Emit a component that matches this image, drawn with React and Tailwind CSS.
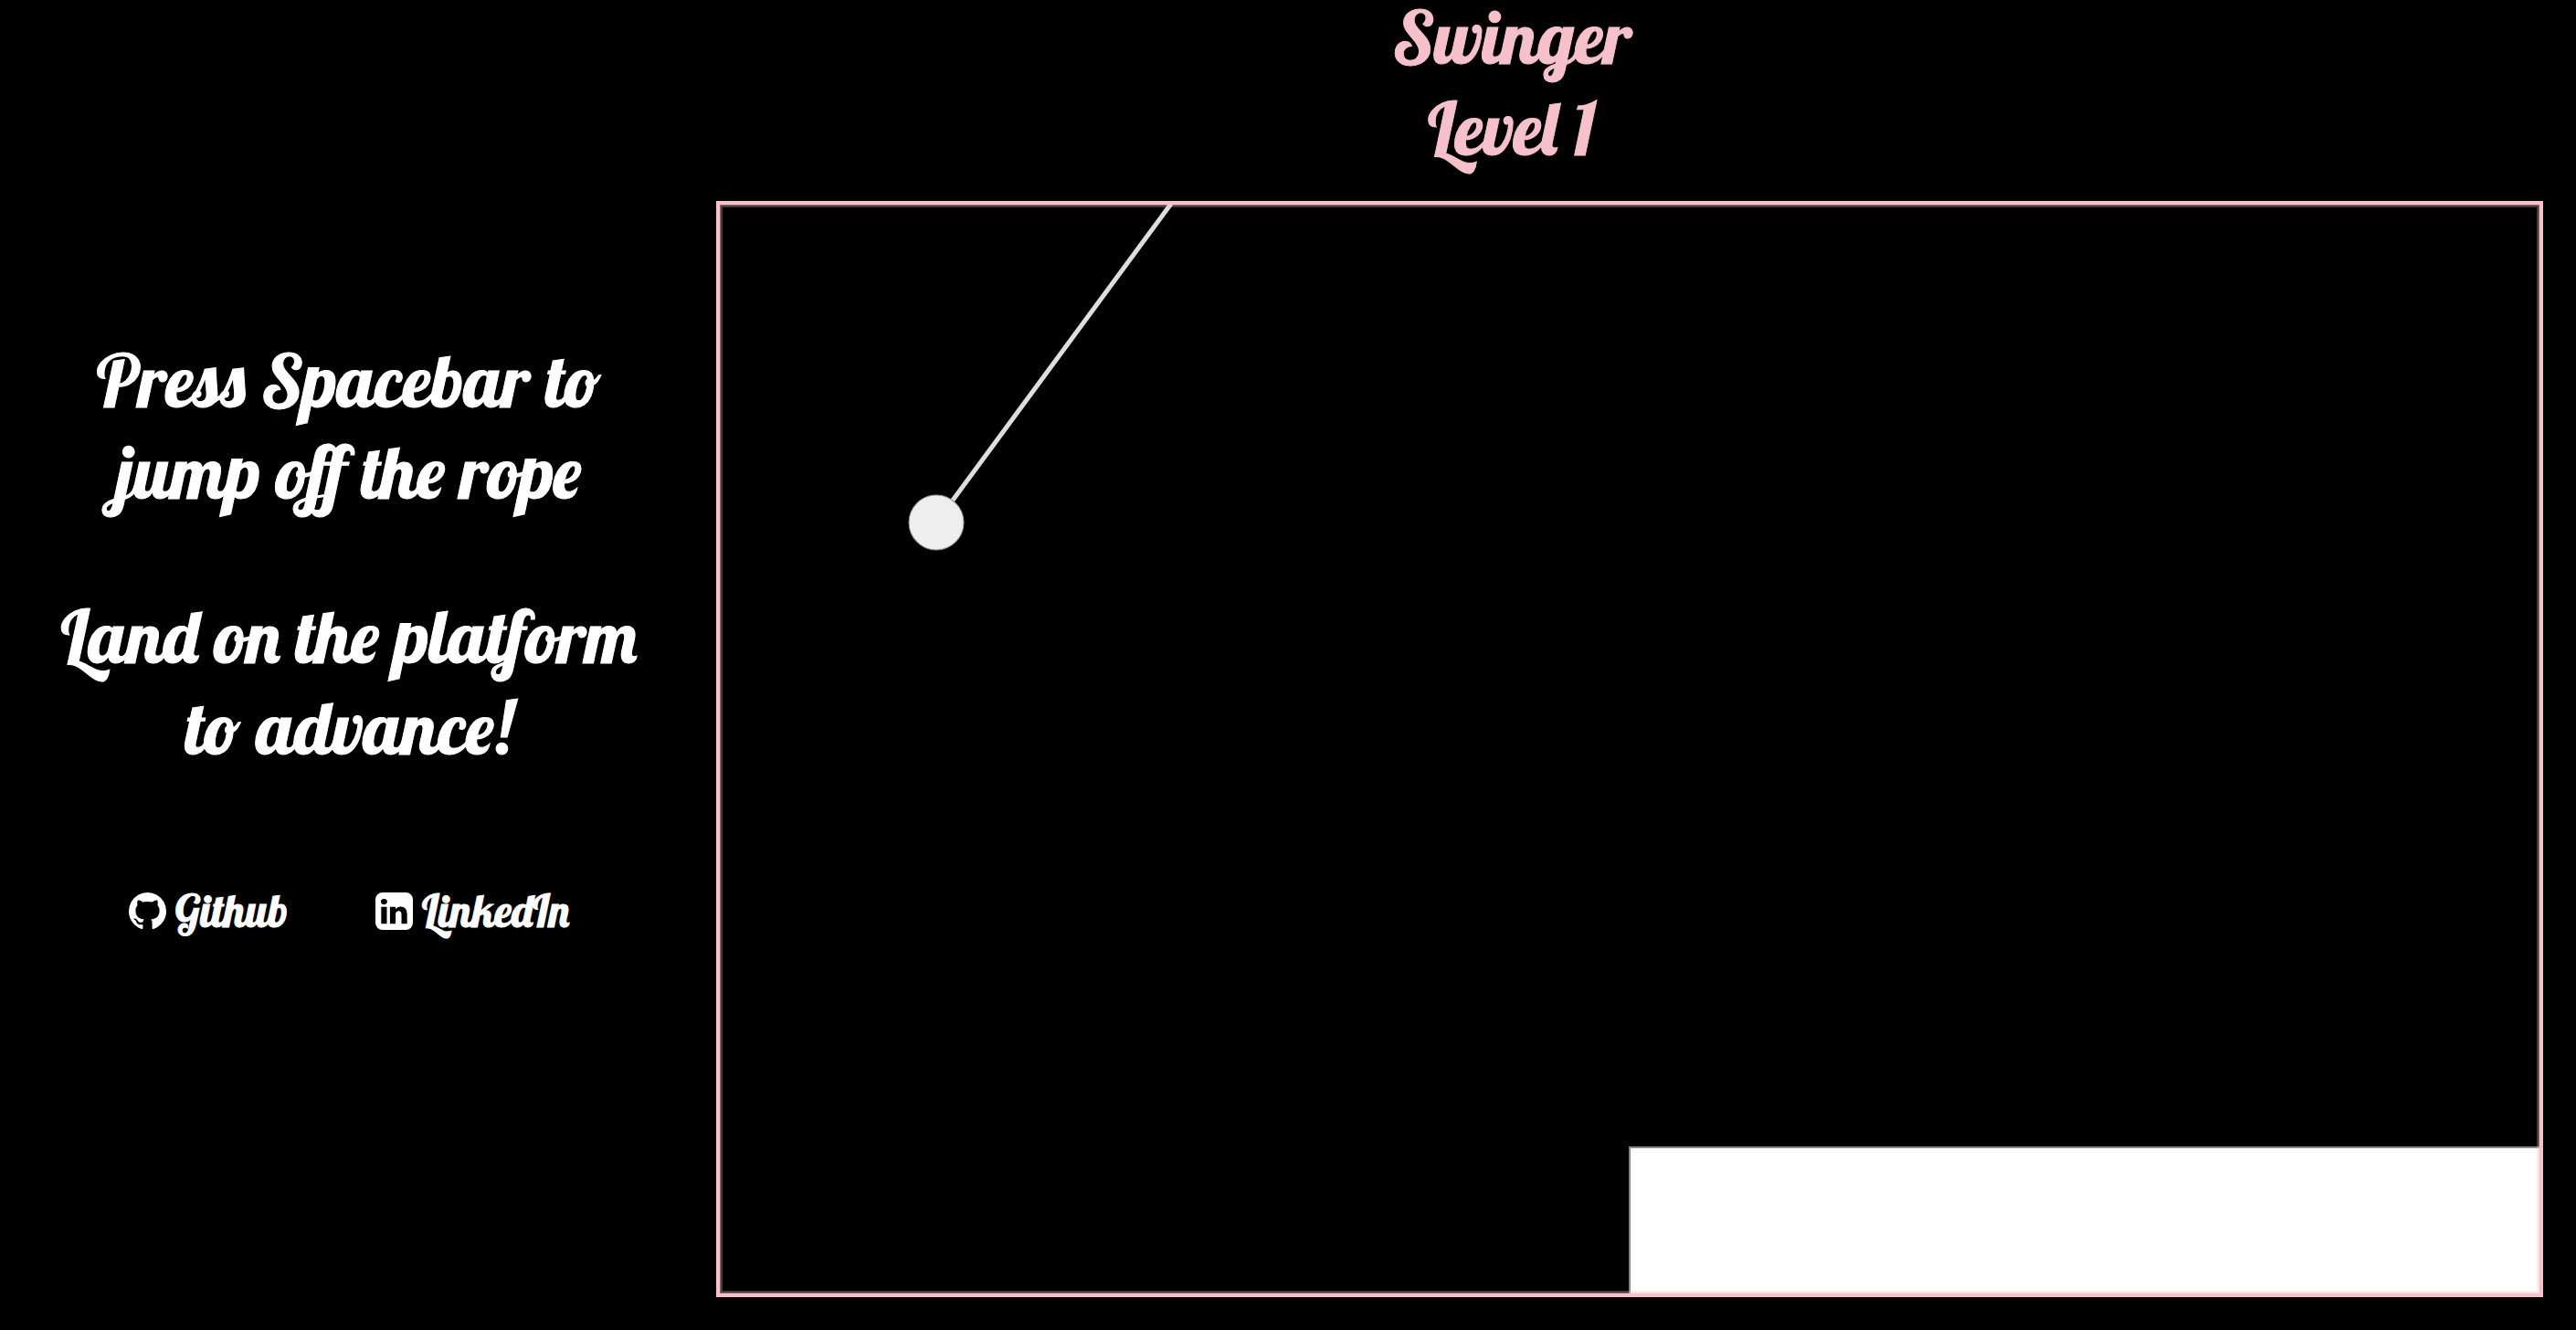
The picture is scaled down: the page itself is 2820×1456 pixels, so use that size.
const githubPath =
  "M768 0q209 0 385.5 103t279.5 279.5 103 385.5q0 251-146.5 451.5t-378.5 277.5q-27 5-40-7t-13-30q0-3 .5-76.5t.5-134.5q0-97-52-142 57-6 102.5-18t94-39 81-66.5 53-105 20.5-150.5q0-119-79-206 37-91-8-204-28-9-81 11t-92 44l-38 24q-93-26-192-26t-192 26q-16-11-42.5-27t-83.5-38.5-85-13.5q-45 113-8 204-79 87-79 206 0 85 20.5 150t52.5 105 80.5 67 94 39 102.5 18q-39 36-49 103-21 10-45 15t-57 5-65.5-21.5-55.5-62.5q-19-32-48.5-52t-49.5-24l-20-3q-21 0-29 4.5t-5 11.5 9 14 13 12l7 5q22 10 43.5 38t31.5 51l10 23q13 38 44 61.5t67 30 69.5 7 55.5-3.5l23-4q0 38 .5 88.5t.5 54.5q0 18-13 30t-40 7q-232-77-378.5-277.5t-146.5-451.5q0-209 103-385.5t279.5-279.5 385.5-103z";

const linkedInPath =
  "M237 1286h231v-694h-231v694zM483 378q-1-52-36-86t-93-34-94.5 34-36.5 86q0 51 35.5 85.5t92.5 34.5h1q59 0 95-34.5t36-85.5zM1068 1286h231v-398q0-154-73-233t-193-79q-136 0-209 117h2v-101h-231q3 66 0 694h231v-388q0-38 7-56 15-35 45-59.5t74-24.5q116 0 116 157v371zM1536 288v960q0 119-84.5 203.5t-203.5 84.5h-960q-119 0-203.5-84.5t-84.5-203.5v-960q0-119 84.5-203.5t203.5-84.5h960q119 0 203.5 84.5t84.5 203.5z";

const links = [
  { label: "Github", href: "https://github.com", path: githubPath },
  { label: "LinkedIn", href: "https://www.linkedin.com", path: linkedInPath },
];

function GameCanvas() {
  return (
    <div className="aspect-5/3 border-4 border-[#f6c1cb]">
      <svg
        viewBox="0 0 1992 1192"
        className="block h-full w-full"
        role="img"
        aria-label="Ball swinging on a rope above a platform"
      >
        <line x1="494" y1="-1" x2="237" y2="348" stroke="#dedede" strokeWidth="5" />
        <circle cx="237" cy="348" r="30" fill="#eeeeee" stroke="#999999" strokeWidth="1" />
        <rect x="996" y="1032" width="996" height="160" fill="#ffffff" />
        <path d="M996 1192V1032H1992" fill="none" stroke="#858585" strokeWidth="2" />
        {/* soft inner edge of the frame */}
        <rect x="1.5" y="1.5" width="1989" height="1189" fill="none" stroke="#f6c1cb" strokeOpacity="0.3" strokeWidth="3" />
        <rect x="0.5" y="0.5" width="1991" height="1191" fill="none" stroke="#f6c1cb" strokeOpacity="0.4" strokeWidth="1" />
      </svg>
    </div>
  );
}

export default function App() {
  return (
    <div className="min-h-screen bg-black font-['Lobster','Liberation_Serif',serif] text-[80px] leading-[100px] text-white [-webkit-text-stroke:1px]">
      <header className="mb-[30px] pl-[17.4%] text-center text-[#f6c1cb]">
        <h1 className="leading-[80px]">Swinger</h1>
        <h2 className="mt-[10px]">Level 1</h2>
      </header>
      <main className="flex items-start">
        <aside className="w-[27.8%] pt-[146px] pr-5 text-center">
          <p>
            Press Spacebar to
            <br />
            jump off the rope
          </p>
          <p className="mt-20">
            Land on the platform
            <br />
            to advance!
          </p>
          <nav className="mt-[121px] flex justify-center gap-24 text-[48px] leading-[60px]">
            {links.map(({ label, href, path }) => (
              <a key={label} href={href} className="flex items-center gap-[10px]">
                <svg viewBox="0 0 1536 1536" className="size-[41px] fill-current" aria-hidden="true">
                  <path d={path} fillRule="evenodd" />
                </svg>
                {label}
              </a>
            ))}
          </nav>
        </aside>
        <section className="mr-9 min-w-0 flex-1">
          <GameCanvas />
        </section>
      </main>
    </div>
  );
}
